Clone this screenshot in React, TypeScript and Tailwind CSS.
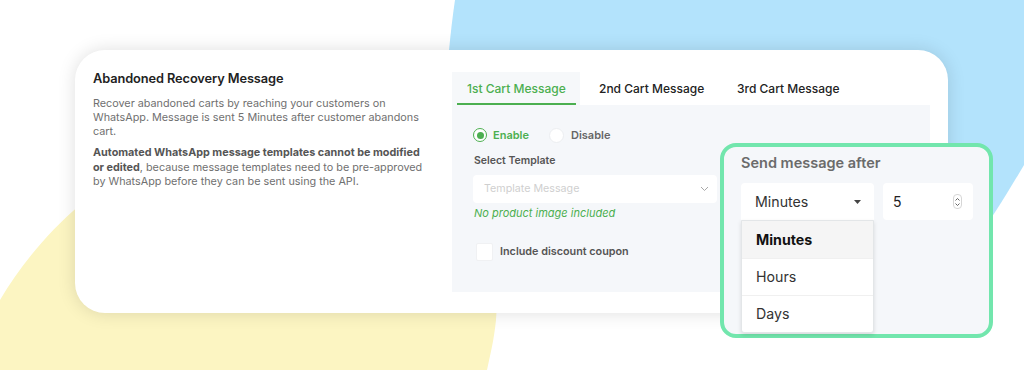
import React from "react";

const tabs = ["1st Cart Message", "2nd Cart Message", "3rd Cart Message"];
const units = ["Minutes", "Hours", "Days"];

export default function App() {
  return (
    <div className="relative w-[1024px] h-[370px] overflow-hidden bg-white font-['Inter',sans-serif]">
      {/* background blobs */}
      <svg className="absolute inset-0" width="1024" height="370" viewBox="0 0 1024 370">
        <path
          d="M455 0 L1024 0 L1024 165 C1008 192 992 218 970 250 L440 250 C440 160 446 60 455 0 Z"
          fill="#b3e3fc"
        />
        <path
          d="M0 300 C20 266 48 232 80 205 L482 205 C494 245 499 285 496 320 C494 340 490 356 487 370 L0 370 Z"
          fill="#fcf5c2"
        />
      </svg>

      <div className="relative pt-[50px] pl-[75px]">
        {/* Main card */}
        <div className="flex w-[873px] h-[263px] rounded-[30px] bg-white shadow-[0_0_18px_rgba(0,0,0,0.13)]">
          {/* Left info */}
          <div className="w-[377px] pl-[18px] pt-[19px]">
            <h2 className="text-[12.8px] leading-[20px] font-semibold text-[#222] tracking-[-0.1px]">
              Abandoned Recovery Message
            </h2>
            <p className="mt-[8px] w-[330px] text-[10.8px] leading-[14px] text-[#707070]">
              Recover abandoned carts by reaching your customers on WhatsApp. Message is sent 5 Minutes after
              customer abandons cart.
            </p>
            <p className="mt-[7px] w-[330px] text-[10.8px] leading-[14.5px] text-[#707070]">
              <b className="font-bold text-[#555]">Automated WhatsApp message templates cannot be modified or edited</b>,
              because message templates need to be pre-approved by WhatsApp before they can be sent using the API.
            </p>
          </div>

          {/* Right tabs */}
          <div className="pt-[22px]">
            <div className="flex h-[33px]">
              {tabs.map((t, i) => (
                <div
                  key={t}
                  className={`relative flex items-center text-[12px] font-medium ${
                    i === 0
                      ? "w-[128px] pl-[15px] bg-[#f6f8fa] text-[#4caf50]"
                      : i === 1
                      ? "w-[138px] pl-[19px] text-[#222]"
                      : "pl-[19px] text-[#222]"
                  }`}
                >
                  {t}
                  {i === 0 && (
                    <div className="absolute left-[5px] right-[4px] bottom-0 h-[2px] bg-[#4caf50]" />
                  )}
                </div>
              ))}
            </div>

            <div className="w-[478px] h-[187px] bg-[#f5f7fa] pl-[21px] pt-[23px]">
              {/* Radios */}
              <div className="flex items-center h-[14px]">
                <span className="flex items-center justify-center w-[14px] h-[14px] rounded-full border-[1.5px] border-[#4caf50] bg-white">
                  <span className="w-[7px] h-[7px] rounded-full bg-[#4caf50]" />
                </span>
                <span className="ml-[6px] text-[11px] font-semibold text-[#4caf50]">Enable</span>
                <span className="ml-[20px] w-[15px] h-[15px] rounded-full bg-white border border-[#eceef1]" />
                <span className="ml-[7px] text-[11px] font-semibold text-[#666]">Disable</span>
              </div>

              <div className="mt-[12px] pl-[1px] text-[10.5px] leading-[14px] font-semibold text-[#555]">
                Select Template
              </div>

              <div className="mt-[7px] flex items-center justify-between w-[244px] h-[28px] rounded-[4px] bg-white pl-[11px] pr-[8px]">
                <span className="text-[10.7px] text-[#cfcfcf]">Template Message</span>
                <svg width="9" height="6" viewBox="0 0 9 6" fill="none">
                  <path d="M1 1 L4.5 4.5 L8 1" stroke="#a8a8a8" strokeWidth="1" />
                </svg>
              </div>

              <div className="mt-[3px] pl-[1px] text-[11px] leading-[14px] italic text-[#4caf50]">
                No product image included
              </div>

              <div className="mt-[23px] flex items-center">
                <span className="ml-[3px] w-[17px] h-[18px] rounded-[2px] bg-white border border-[#f0f1f3]" />
                <span className="ml-[7px] text-[10.8px] font-semibold text-[#555]">Include discount coupon</span>
              </div>
            </div>
          </div>
        </div>
      </div>

      {/* Send message after overlay */}
      <div className="absolute left-[720px] top-[143px] w-[273px] h-[195px] rounded-[16px] border-[4px] border-[#72e6ad] bg-[#f5f7fa] pl-[17px] pt-[6px]">
        <div className="text-[14.5px] leading-[20px] font-semibold text-[#6b6b6b]">Send message after</div>
        <div className="mt-[10px] flex">
          <div className="relative">
            <div className="flex items-center justify-between w-[133px] h-[37px] rounded-t-[4px] bg-white pl-[14px] pr-[13px]">
              <span className="text-[14.2px] text-[#333]">Minutes</span>
              <svg width="7" height="4" viewBox="0 0 7 4">
                <path d="M0 0 L7 0 L3.5 4 Z" fill="#444" />
              </svg>
            </div>
            <div className="absolute left-0 top-[37px] w-[133px] bg-white border border-[#e3e6e8] rounded-b-[3px] shadow-[0_2px_4px_rgba(0,0,0,0.12)]">
              {units.map((u, i) => (
                <div
                  key={u}
                  className={`flex items-center h-[37px] pl-[14px] text-[14.2px] ${
                    i === 0 ? "bg-[#f5f5f5] font-bold text-[#111]" : "text-[#333] border-t border-[#f0f0f0]"
                  }`}
                >
                  {u}
                </div>
              ))}
            </div>
          </div>
          <div className="ml-[9px] flex items-center justify-between w-[90px] h-[37px] rounded-[4px] bg-white pl-[10px] pr-[11px]">
            <span className="text-[14px] text-[#222]">5</span>
            <span className="flex flex-col items-center justify-center w-[9px] h-[15px] rounded-[4px] border border-[#d6d6d6] gap-[2px]">
              <svg width="5" height="3" viewBox="0 0 5 3">
                <path d="M0.5 2.5 L2.5 0.5 L4.5 2.5" stroke="#555" strokeWidth="0.9" fill="none" />
              </svg>
              <svg width="5" height="3" viewBox="0 0 5 3">
                <path d="M0.5 0.5 L2.5 2.5 L4.5 0.5" stroke="#555" strokeWidth="0.9" fill="none" />
              </svg>
            </span>
          </div>
        </div>
      </div>
    </div>
  );
}
